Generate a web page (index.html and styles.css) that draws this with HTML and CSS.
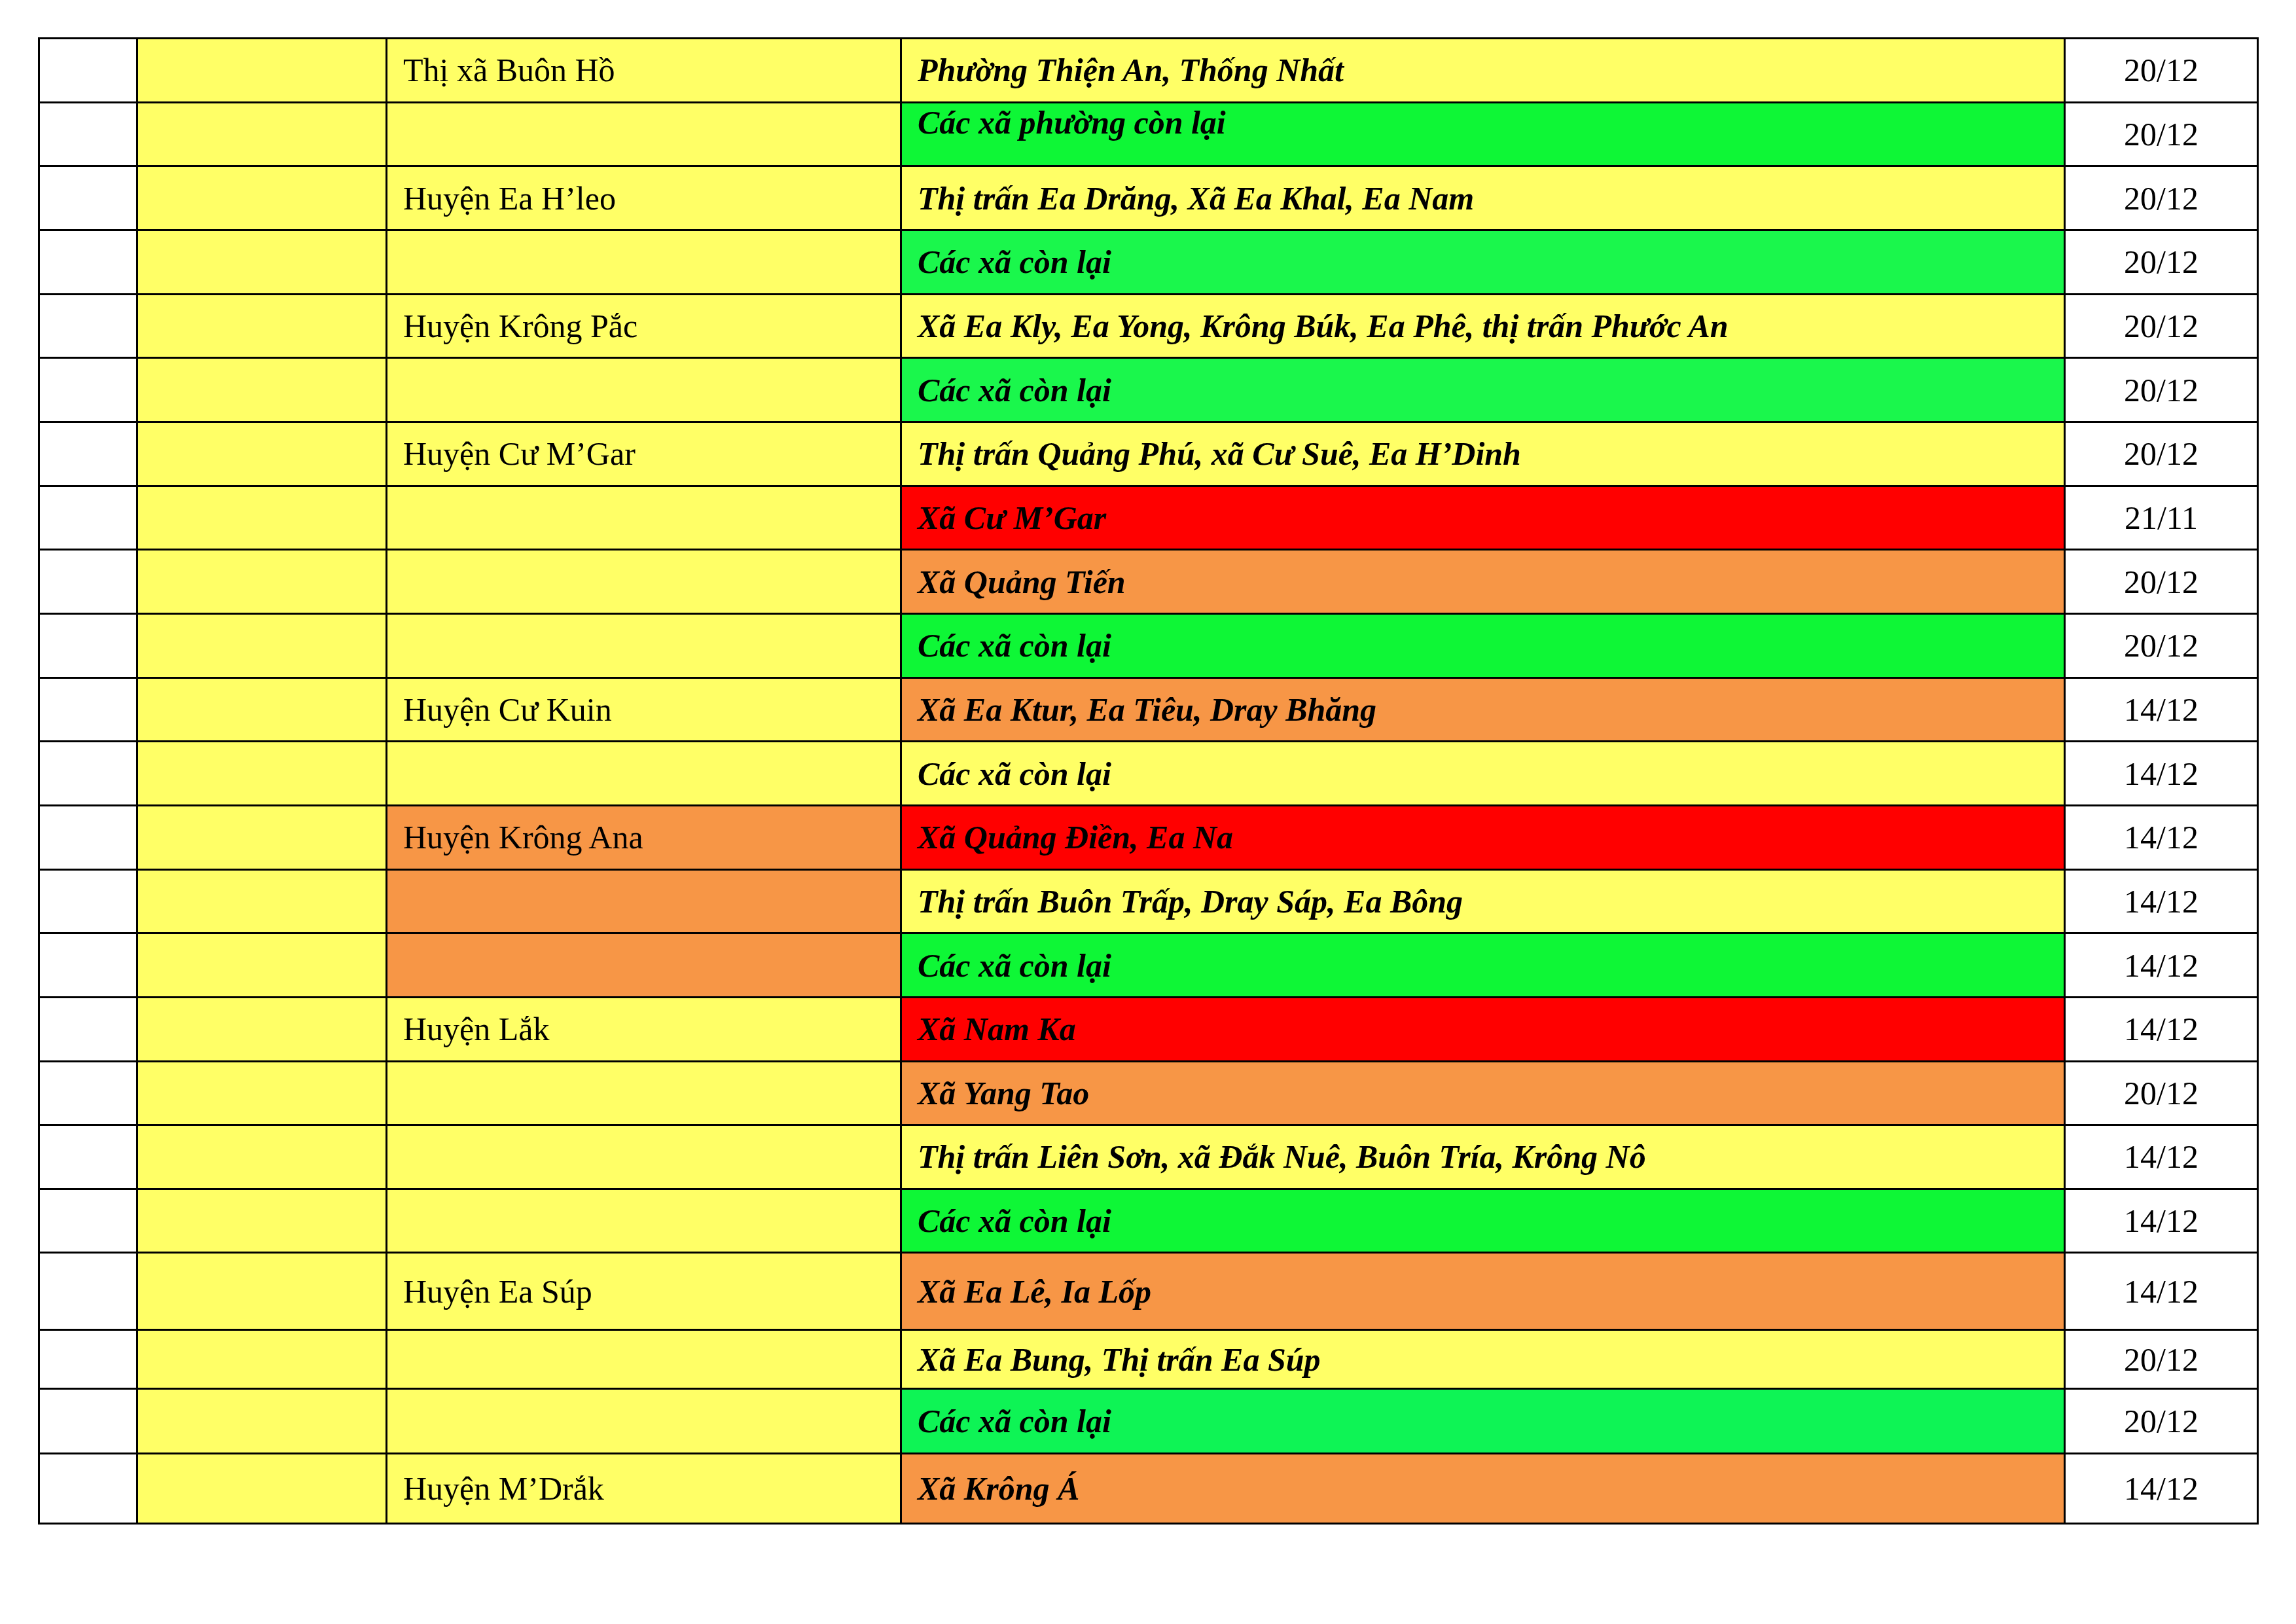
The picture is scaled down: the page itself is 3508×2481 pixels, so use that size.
FILE: index.html
```html
<!DOCTYPE html>
<html lang="vi">
<head>
<meta charset="utf-8">
<title>Bảng</title>
<link rel="stylesheet" href="styles.css">
</head>
<body>
<div class="page">
<table class="grid">
<colgroup>
<col class="c1"><col class="c2"><col class="c3"><col class="c4"><col class="c5">
</colgroup>
<tbody>
<tr><td></td><td class="y"></td><td class="y unit">Thị xã Buôn Hồ</td><td class="y area">Phường Thiện An, Thống Nhất</td><td class="date">20/12</td></tr>
<tr><td></td><td class="y"></td><td class="y"></td><td class="g1 area top">Các xã phường còn lại</td><td class="date">20/12</td></tr>
<tr><td></td><td class="y"></td><td class="y unit">Huyện Ea H’leo</td><td class="y area">Thị trấn Ea Drăng, Xã Ea Khal, Ea Nam</td><td class="date">20/12</td></tr>
<tr><td></td><td class="y"></td><td class="y"></td><td class="g2 area">Các xã còn lại</td><td class="date">20/12</td></tr>
<tr><td></td><td class="y"></td><td class="y unit">Huyện Krông Pắc</td><td class="y area">Xã Ea Kly, Ea Yong, Krông Búk, Ea Phê, thị trấn Phước An</td><td class="date">20/12</td></tr>
<tr><td></td><td class="y"></td><td class="y"></td><td class="g2 area">Các xã còn lại</td><td class="date">20/12</td></tr>
<tr><td></td><td class="y"></td><td class="y unit">Huyện Cư M’Gar</td><td class="y area">Thị trấn Quảng Phú, xã Cư Suê, Ea H’Dinh</td><td class="date">20/12</td></tr>
<tr><td></td><td class="y"></td><td class="y"></td><td class="r area">Xã Cư M’Gar</td><td class="date">21/11</td></tr>
<tr><td></td><td class="y"></td><td class="y"></td><td class="o area">Xã Quảng Tiến</td><td class="date">20/12</td></tr>
<tr><td></td><td class="y"></td><td class="y"></td><td class="g1 area">Các xã còn lại</td><td class="date">20/12</td></tr>
<tr><td></td><td class="y"></td><td class="y unit">Huyện Cư Kuin</td><td class="o area">Xã Ea Ktur, Ea Tiêu, Dray Bhăng</td><td class="date">14/12</td></tr>
<tr><td></td><td class="y"></td><td class="y"></td><td class="y area">Các xã còn lại</td><td class="date">14/12</td></tr>
<tr><td></td><td class="y"></td><td class="o unit">Huyện Krông Ana</td><td class="r area">Xã Quảng Điền, Ea Na</td><td class="date">14/12</td></tr>
<tr><td></td><td class="y"></td><td class="o"></td><td class="y area">Thị trấn Buôn Trấp, Dray Sáp, Ea Bông</td><td class="date">14/12</td></tr>
<tr><td></td><td class="y"></td><td class="o"></td><td class="g1 area">Các xã còn lại</td><td class="date">14/12</td></tr>
<tr><td></td><td class="y"></td><td class="y unit">Huyện Lắk</td><td class="r area">Xã Nam Ka</td><td class="date">14/12</td></tr>
<tr><td></td><td class="y"></td><td class="y"></td><td class="o area">Xã Yang Tao</td><td class="date">20/12</td></tr>
<tr><td></td><td class="y"></td><td class="y"></td><td class="y area">Thị trấn Liên Sơn, xã Đắk Nuê, Buôn Tría, Krông Nô</td><td class="date">14/12</td></tr>
<tr><td></td><td class="y"></td><td class="y"></td><td class="g1 area">Các xã còn lại</td><td class="date">14/12</td></tr>
<tr class="tall"><td></td><td class="y"></td><td class="y unit">Huyện Ea Súp</td><td class="o area">Xã Ea Lê, Ia Lốp</td><td class="date">14/12</td></tr>
<tr class="short"><td></td><td class="y"></td><td class="y"></td><td class="y area">Xã Ea Bung, Thị trấn Ea Súp</td><td class="date">20/12</td></tr>
<tr class="mid"><td></td><td class="y"></td><td class="y"></td><td class="g3 area">Các xã còn lại</td><td class="date">20/12</td></tr>
<tr class="last"><td></td><td class="y"></td><td class="y unit">Huyện M’Drắk</td><td class="o area">Xã Krông Á</td><td class="date">14/12</td></tr>
</tbody>
</table>
</div>
</body>
</html>
```

FILE: styles.css
```css
html, body {
  margin: 0;
  padding: 0;
  background: #ffffff;
}

.page {
  padding: 57px 0 0 58px;
  font-family: "Liberation Serif", "Times New Roman", serif;
  font-size: 50px;
  color: #000000;
}

.grid {
  border-collapse: collapse;
  table-layout: fixed;
  width: 3390px;
  border: 3px solid #000;
}

.c1 { width: 150px; }
.c2 { width: 381px; }
.c3 { width: 786px; }
.c4 { width: 1778px; }
.c5 { width: 295px; }

.grid tr {
  height: 97.66px;
}

.grid tr.tall { height: 118px; }
.grid tr.short { height: 90px; }
.grid tr.mid { height: 99px; }
.grid tr.last { height: 107px; }

.grid td {
  border: 3px solid #000;
  padding: 0 24px;
  vertical-align: middle;
  white-space: nowrap;
  line-height: normal;
}

.unit {
  font-weight: normal;
}

.area {
  font-weight: bold;
  font-style: italic;
  padding-left: 23px;
}

.grid td.top {
  vertical-align: top;
}

.date {
  text-align: center;
}

.y { background: #ffff66; }
.o { background: #f79646; }
.r { background: #ff0000; }
.g1 { background: #0ef736; }
.g2 { background: #1af74c; }
.g3 { background: #0ef455; }
```
